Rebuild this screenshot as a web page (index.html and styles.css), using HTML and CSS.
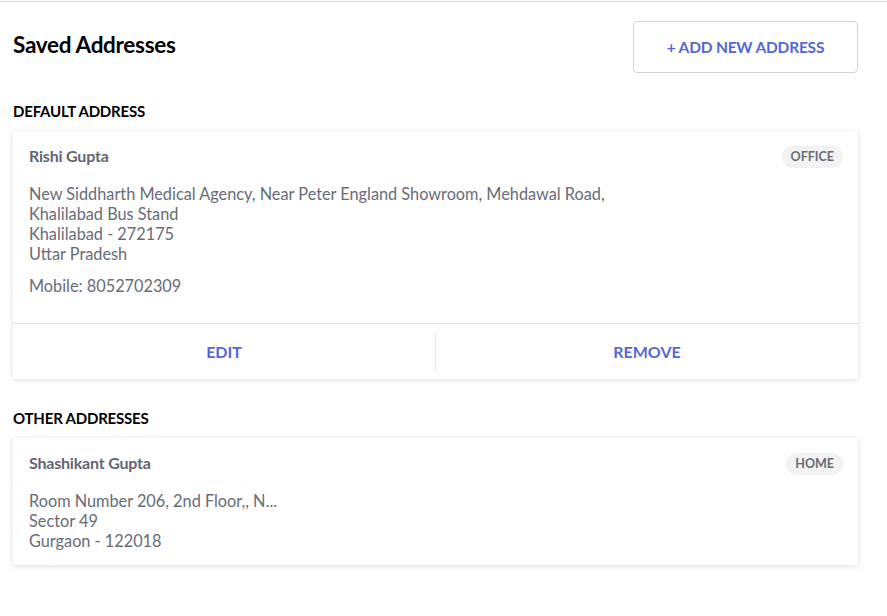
FILE: index.html
```html
<!DOCTYPE html>
<html>
<head>
<meta charset="utf-8">
<link rel="stylesheet" href="styles.css">
</head>
<body>
<div class="page">
  <div class="header">
    <h1 class="title">Saved Addresses</h1>
    <button class="add-btn">+ ADD NEW ADDRESS</button>
  </div>

  <h2 class="section-title">DEFAULT ADDRESS</h2>
  <div class="card">
    <div class="card-body">
      <div class="card-top">
        <div class="name">Rishi Gupta</div>
        <span class="tag">OFFICE</span>
      </div>
      <div class="address">
        <div>New Siddharth Medical Agency, Near Peter England Showroom, Mehdawal Road,</div>
        <div>Khalilabad Bus Stand</div>
        <div>Khalilabad - 272175</div>
        <div>Uttar Pradesh</div>
      </div>
      <div class="mobile">Mobile: 8052702309</div>
    </div>
    <div class="actions">
      <button class="action">EDIT</button>
      <span class="sep"></span>
      <button class="action">REMOVE</button>
    </div>
  </div>

  <h2 class="section-title other">OTHER ADDRESSES</h2>
  <div class="card">
    <div class="card-body short">
      <div class="card-top">
        <div class="name">Shashikant Gupta</div>
        <span class="tag">HOME</span>
      </div>
      <div class="address">
        <div>Room Number 206, 2nd Floor,, N...</div>
        <div>Sector 49</div>
        <div>Gurgaon - 122018</div>
      </div>
    </div>
  </div>
</div>
</body>
</html>
```

FILE: styles.css
```css
* { box-sizing: border-box; }
html, body { margin: 0; padding: 0; background: #fff; }
body {
  font-family: "Lato", "Liberation Sans", sans-serif;
  color: #000;
  border-top: 1px solid #d9d9d9;
  margin-top: 1px;
}
.page {
  padding: 0 29px 40px 13px;
}
.header {
  display: flex;
  justify-content: space-between;
  align-items: center;
  padding-top: 19px;
}
.title {
  margin: 0 0 6px;
  font-size: 22.5px;
  font-weight: 700;
  letter-spacing: -0.3px;
}
.add-btn {
  font-family: inherit;
  background: #fff;
  border: 1px solid #d3d3d8;
  border-radius: 4px;
  width: 225px;
  height: 52px;
  color: #5468d4;
  font-size: 15.5px;
  font-weight: 700;
  letter-spacing: -0.2px;
}
.section-title {
  margin: 29px 0 11px;
  font-size: 15px;
  font-weight: 700;
  line-height: 18px;
  letter-spacing: -0.2px;
}
.section-title.other { margin-top: 30px; }
.card {
  background: #fff;
  box-shadow: 0 1px 6px rgba(0,0,0,0.14);
}
.card-body {
  padding: 14px 15px 27px 16px;
  border-bottom: 1px solid #e6e6e6;
}
.card-body.short {
  border-bottom: none;
  padding-bottom: 14px;
}
.card-top {
  display: flex;
  justify-content: space-between;
  align-items: center;
  height: 20px;
}
.name {
  font-size: 16px;
  font-weight: 700;
  color: #626672;
  letter-spacing: -0.2px;
}
.tag {
  margin-top: 4px;
  background: #f2f2f3;
  border-radius: 12px;
  padding: 4px 9px;
  font-size: 12.5px;
  font-weight: 700;
  color: #676b77;
  line-height: 14px;
}
.address {
  margin-top: 19px;
  font-size: 16.3px;
  line-height: 20px;
  color: #686c77;
}
.mobile {
  margin-top: 12px;
  font-size: 16.3px;
  line-height: 20px;
  color: #686c77;
}
.actions {
  display: flex;
  align-items: center;
  height: 55px;
}
.action {
  flex: 1;
  font-family: inherit;
  background: none;
  border: none;
  color: #5468d4;
  font-size: 16px;
  font-weight: 700;
  height: 100%;
}
.sep {
  width: 1px;
  height: 38px;
  background: #e6e6e6;
}
```
